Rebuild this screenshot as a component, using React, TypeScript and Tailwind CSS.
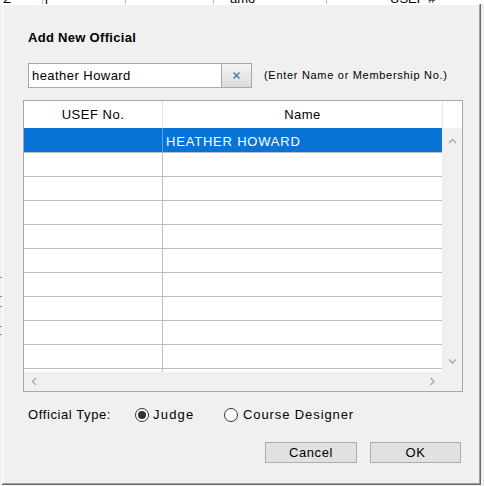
import React from 'react';

const font = { fontFamily: '"Liberation Sans", Arial, sans-serif' };

const Chevron = ({ dir }: { dir: 'up' | 'down' | 'left' | 'right' }) => {
  const pts = {
    up: '1,5 4.5,1.5 8,5',
    down: '1,1.5 4.5,5 8,1.5',
    left: '5,1 1.5,4.5 5,8',
    right: '1.5,1 5,4.5 1.5,8',
  }[dir];
  const vertical = dir === 'up' || dir === 'down';
  return (
    <svg width={vertical ? 9 : 7} height={vertical ? 7 : 9} viewBox={vertical ? '0 0 9 7' : '0 0 7 9'}>
      <polyline points={pts} fill="none" stroke="#a6a6a6" strokeWidth="1.3" />
    </svg>
  );
};

const Radio = ({ checked }: { checked?: boolean }) => (
  <span className="w-[14px] h-[14px] rounded-full border border-[#333] bg-white flex items-center justify-center">
    {checked && <span className="w-[8px] h-[8px] rounded-full bg-[#333]" />}
  </span>
);

export default function App() {
  const rows = Array.from({ length: 10 });

  return (
    <div className="relative w-[484px] h-[486px] bg-[#f0f0f0] overflow-hidden text-[#000]" style={font}>
      {/* window behind the dialog */}
      <div className="absolute left-0 top-0 w-[484px] h-[4px] bg-white overflow-hidden">
        <div className="relative h-full text-[13px]">
          <span className="absolute left-[3px] top-[-11px]">Σ</span>
          <span className="absolute left-[45px] top-[-11px]">j</span>
          <span className="absolute left-[230px] top-[-11px]">amo</span>
          <span className="absolute left-[390px] top-[-11px]">USEF #</span>
          <span className="absolute left-[42px] top-0 w-px h-full bg-[#bbb]" />
          <span className="absolute left-[125px] top-0 w-px h-full bg-[#bbb]" />
          <span className="absolute left-[213px] top-0 w-px h-full bg-[#bbb]" />
          <span className="absolute left-[326px] top-0 w-px h-full bg-[#bbb]" />
        </div>
      </div>
      <span className="absolute left-0 top-[277px] w-[2px] h-px bg-[#888]" />
      <span className="absolute left-0 top-[296px] w-[2px] h-px bg-[#888]" />
      <span className="absolute left-0 top-[306px] w-[2px] h-px bg-[#888]" />
      <span className="absolute left-0 top-[326px] w-[2px] h-px bg-[#888]" />
      <span className="absolute left-0 top-[334px] w-[2px] h-px bg-[#888]" />

      {/* dialog */}
      <div className="absolute left-[2px] top-[4px] w-[479px] h-[481px] border-r border-b border-[#6a6a6a]">
        <div className="w-full h-full bg-[#f0f0f0] border-l border-t border-white border-r border-r-[#a0a0a0] border-b border-b-[#a0a0a0] flex flex-col">
          <div className="ml-[25px] mt-[25px] h-[16px] leading-[16px] text-[13px] font-bold tracking-[0.3px]">Add New Official</div>

          <div className="ml-[25px] mt-[17px] h-[25px] flex items-center">
            <div className="w-[193px] h-full bg-white border border-[#a8a8a8] border-r-0 flex items-center pl-[3px] text-[13px] tracking-[0.45px]">
              heather Howard
            </div>
            <div className="w-[31px] h-full border border-[#a8a8a8] bg-gradient-to-b from-[#f5f5f5] to-[#dcdcdc] flex items-center justify-center">
              <svg width="9" height="9" viewBox="0 0 9 9">
                <path d="M1.5 1.5 L7.5 7.5 M7.5 1.5 L1.5 7.5" stroke="#4a7cb3" strokeWidth="1.5" />
              </svg>
            </div>
            <span className="ml-[12px] text-[11px] tracking-[0.7px]">(Enter Name or Membership No.)</span>
          </div>

          <div className="ml-[20px] mt-[12px] w-[440px] h-[292px] border border-[#aaa4ac] bg-white flex flex-col">
            <div className="flex h-[271px]">
              <div className="w-[418px] flex flex-col">
                <div className="h-[27px] flex text-[13px] tracking-[0.5px] shrink-0">
                  <div className="w-[139px] border-r border-[#e0e0e0] flex items-center justify-center">USEF No.</div>
                  <div className="flex-1 flex items-center justify-center">Name</div>
                </div>
                <div className="flex-1 overflow-hidden">
                  {rows.map((_, i) =>
                    i === 0 ? (
                      <div key={i} className="h-[24px] flex bg-[#0a74d6] text-white text-[13px] tracking-[0.8px]">
                        <div className="w-[139px] border-r border-[#5d9fe0]" />
                        <div className="flex-1 flex items-center pl-[3px] pt-[3px]">HEATHER HOWARD</div>
                      </div>
                    ) : (
                      <div key={i} className="h-[24px] flex border-t border-[#bdbdbd]">
                        <div className="w-[139px] border-r border-[#bdbdbd]" />
                        <div className="flex-1" />
                      </div>
                    )
                  )}
                  <div className="h-[6px] flex border-t border-[#bdbdbd]">
                    <div className="w-[139px] border-r border-[#bdbdbd]" />
                  </div>
                </div>
              </div>
              <div className="w-[20px] flex flex-col">
                <div className="h-[27px] border-l border-[#e6e6e6] bg-white shrink-0" />
                <div className="flex-1 bg-[#f0f0f0] flex flex-col items-center justify-between pt-[10px] pb-[7px]">
                  <Chevron dir="up" />
                  <Chevron dir="down" />
                </div>
              </div>
            </div>
            <div className="flex-1 bg-[#f0f0f0] flex items-center justify-between pl-[7px] pr-[26px]">
              <Chevron dir="left" />
              <Chevron dir="right" />
            </div>
          </div>

          <div className="ml-[25px] mt-[15px] h-[16px] flex items-center text-[13px] tracking-[0.6px]">
            <span className="w-[107px]">Official Type:</span>
            <Radio checked />
            <span className="ml-[4px] w-[71px] tracking-[1.2px]">Judge</span>
            <Radio />
            <span className="ml-[5px] tracking-[0.9px]">Course Designer</span>
          </div>

          <div className="mt-[19px] flex">
            <button className="ml-[262px] w-[92px] h-[21px] bg-[#e1e1e1] border border-[#adadad] text-[13px] tracking-[0.6px]">Cancel</button>
            <button className="ml-[13px] w-[91px] h-[21px] bg-[#e1e1e1] border border-[#adadad] text-[13px] tracking-[0.6px]">OK</button>
          </div>
        </div>
      </div>
    </div>
  );
}
